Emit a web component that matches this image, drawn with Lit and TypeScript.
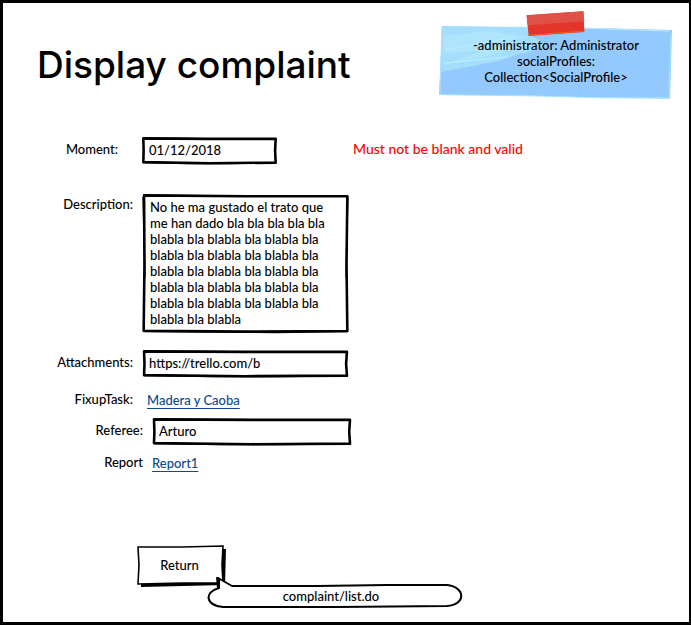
import { LitElement, html, css } from "lit";
import { customElement, property } from "lit/decorators.js";

const DESCRIPTION = [
  "No he ma gustado el trato que",
  "me han dado bla bla bla bla bla",
  "blabla bla blabla bla blabla bla",
  "blabla bla blabla bla blabla bla",
  "blabla bla blabla bla blabla bla",
  "blabla bla blabla bla blabla bla",
  "blabla bla blabla bla blabla bla",
  "blabla bla blabla",
].join("\n");

const LOW_BOX = [
  "M1 5 L50 7 L99 7 L98.6 50 L99 95 L50 97 L1 93 L1.2 50 Z",
  "M0.8 4 L30 5 L70 8 L99.4 6 M0.8 95 L35 98 L65 98 L99.4 96",
];
const TALL_BOX = [
  "M1 1 L50 1.6 L99.2 1.6 L98.8 50 L99.2 98.6 L50 99 L0.8 98.4 L1.2 50 Z",
  "M0.8 0.8 L40 1.4 L99.4 1.2 M0.8 99 L35 99.4 L65 99.6 L99.4 99 M0.5 2 L1.4 60 M99.4 2 L98.6 60",
];

/* A hand-drawn box around whatever is slotted into it. */
@customElement("sketch-box")
export class SketchBox extends LitElement {
  static styles = css`
    :host {
      display: block;
      position: relative;
    }
    .ink {
      position: absolute;
      inset: 0;
      width: 100%;
      height: 100%;
      overflow: visible;
      pointer-events: none;
    }
    .line {
      fill: none;
      stroke: #000;
      stroke-width: 2.6;
      stroke-linejoin: round;
      vector-effect: non-scaling-stroke;
    }
    .thin {
      stroke-width: 1.4;
    }
  `;

  @property({ type: Boolean }) tall = false;

  render() {
    const [outline, shade] = this.tall ? TALL_BOX : LOW_BOX;
    return html`
      <slot></slot>
      <svg class="ink" viewBox="0 0 100 100" preserveAspectRatio="none" aria-hidden="true">
        <path class="line" d=${outline} />
        <path class="line thin" d=${shade} />
      </svg>
    `;
  }
}

@customElement("app-root")
export class AppRoot extends LitElement {
  static styles = css`
    :host {
      display: block;
      font-family: Lato, "Liberation Sans", sans-serif;
      font-size: 13px;
      line-height: 16px;
      font-weight: 500;
      color: #000;
    }
    * {
      box-sizing: border-box;
    }
    .page {
      min-height: 100vh;
      padding: 8px 16px 16px 0;
      background: #fff;
      border: 3px solid #000;
      border-right-width: 2px;
    }
    .header {
      display: flex;
      justify-content: space-between;
      align-items: flex-start;
      height: 126px;
    }
    .title {
      margin: 30px 0 0 34px;
      font-family: Inter, "Liberation Sans", sans-serif;
      font-size: 37px;
      line-height: 48px;
      font-weight: 500;
    }
    .note {
      position: relative;
      width: 234px;
      height: 90px;
      padding-top: 26px;
      text-align: center;
    }
    .paper {
      position: absolute;
      inset: 0;
      width: 100%;
      height: 100%;
    }
    .note-text {
      position: relative;
      margin: 0;
    }
    .row {
      display: flex;
      align-items: center;
      height: 27px;
    }
    .label,
    .error {
      padding-bottom: 3px;
    }
    .label {
      width: 130px;
      margin-right: 9px;
      text-align: right;
      flex: none;
    }
    .moment {
      width: 115px;
      margin-right: 24px;
    }
    .wide {
      width: 140px;
    }
    .top {
      align-items: flex-start;
      height: 139px;
      margin: 30px 0 17px;
    }
    .top .label {
      margin-top: 2px;
    }
    .link-row {
      margin: 9px 0 5px;
    }
    .link-row .label,
    .report-row .label {
      padding-bottom: 1px;
    }
    .report-row {
      margin-top: 4px;
    }
    .short {
      width: 135px;
    }
    .long {
      width: 207px;
    }
    .mid {
      width: 200px;
    }
    .field {
      display: block;
      width: 100%;
      height: 27px;
      margin: 0;
      padding: 0 7px 2px;
      border: 0;
      outline: 0;
      background: transparent;
      font: inherit;
      color: inherit;
    }
    .area {
      height: 139px;
      padding: 5px 8px;
      resize: none;
      overflow: hidden;
      white-space: pre;
    }
    .error {
      margin-left: 76px;
      font-size: 14px;
      color: #f00;
    }
    .link {
      margin-left: 5px;
      color: #0b4a8f;
      text-decoration: underline;
      text-underline-offset: 3px;
    }
    .report-row .link {
      margin-left: 0;
    }
    .actions {
      position: relative;
      width: max-content;
      margin: 69px 0 0 134px;
    }
    .button {
      position: relative;
      display: block;
      width: 89px;
      height: 42px;
      padding: 0 4px 2px 0;
      border: 0;
      background: transparent;
      font: inherit;
      color: inherit;
    }
    .button-ink {
      position: absolute;
      inset: 0;
    }
    .button-text {
      position: relative;
    }
    .bubble {
      position: absolute;
      left: 70px;
      top: 31px;
      width: 256px;
      height: 34px;
      padding: 12px 8px 0 0;
      text-align: center;
    }
    .bubble-ink {
      position: absolute;
      inset: 0;
    }
    .bubble-text {
      position: relative;
    }
  `;

  render() {
    return html`
      <main class="page">
        <header class="header">
          <h1 class="title">Display complaint</h1>
          <aside class="note">
            <svg class="paper" viewBox="0 0 235 90" aria-hidden="true">
              <path d="M3 15 L90 16 L160 17 L234 19 L233 54 L232 88 L165 87 L90 85 L0 84 L2 45 Z" fill="#93c9fd" />
              <path d="M3 15 L92 16 L92 25 Q120 35 80 43 L60 50 L2 61 Z" fill="#a5defc" />
              <path d="M5 25 L50 20 L90 26 L45 34 L80 36 L30 50 L4 54 L42 40 L5 42 Z" fill="#b2e8fd" opacity=".65" />
              <path d="M6 39 L65 28 M5 52 L70 46 M145 17 L231 20" fill="none" stroke="#bcecff" stroke-width="1" />
              <path d="M3 16 L2 45 L1 83 M6 84 L90 85 L165 87 L231 87 L233 22" fill="none" stroke="#a6e5fb" stroke-width="1" />
              <path d="M88 4 L145 0 L146 21 L90 25 Z" fill="#e5352a" />
              <path d="M88 4 L145 0 L146 10 L89 14 Z" fill="#df5047" />
              <path d="M90 24 L146 20" stroke="#f25e1b" stroke-width="1" />
            </svg>
            <p class="note-text">-administrator: Administrator<br />socialProfiles:<br />Collection&lt;SocialProfile&gt;</p>
          </aside>
        </header>

        <div class="row">
          <label class="label moment" for="moment">Moment:</label>
          <sketch-box class="short"><input class="field" id="moment" .value=${"01/12/2018"} /></sketch-box>
          <span class="error">Must not be blank and valid</span>
        </div>
        <div class="row top">
          <label class="label" for="description">Description:</label>
          <sketch-box class="long" tall><textarea class="field area" id="description" .value=${DESCRIPTION}></textarea></sketch-box>
        </div>
        <div class="row">
          <label class="label" for="attachments">Attachments:</label>
          <sketch-box class="long"><input class="field" id="attachments" .value=${"https://trello.com/b"} /></sketch-box>
        </div>
        <div class="row link-row">
          <span class="label">FixupTask:</span>
          <a class="link" href="#task">Madera y Caoba</a>
        </div>
        <div class="row">
          <label class="label wide" for="referee">Referee:</label>
          <sketch-box class="mid"><input class="field" id="referee" .value=${"Arturo"} /></sketch-box>
        </div>
        <div class="row report-row">
          <span class="label wide">Report</span>
          <a class="link" href="#report">Report1</a>
        </div>

        <div class="actions">
          <button class="button" type="button">
            <svg class="button-ink" width="89" height="42" viewBox="0 0 89 42" aria-hidden="true">
              <path d="M4 38 L84 37 L85 4 L89 4 L88 40 L4 42 Z" fill="#000" />
              <path d="M1 2 L45 2 L86 1 L85 20 L86 38 L45 38 L1 39 L2 20 Z" fill="#fff" stroke="#000" stroke-width="1.6" />
            </svg>
            <span class="button-text">Return</span>
          </button>
          <div class="bubble">
            <svg class="bubble-ink" width="256" height="34" viewBox="0 0 256 34" aria-hidden="true">
              <path
                d="M11 2 L25 10 L110 10 L180 9 L240 9 C259 11 259 29 240 30 L130 31 L16 31 C-2 29 -3 16 12 12 Z"
                fill="#fff" stroke="#000" stroke-width="2" stroke-linejoin="round" />
              <path d="M9 1 L13 2 L13 13 L10 12 Z" fill="#000" />
            </svg>
            <span class="bubble-text">complaint/list.do</span>
          </div>
        </div>
      </main>
    `;
  }
}
